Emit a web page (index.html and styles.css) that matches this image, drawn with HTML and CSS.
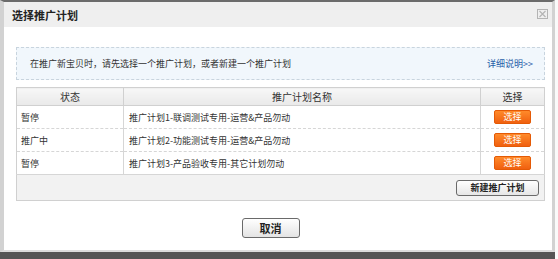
FILE: index.html
```html
<!DOCTYPE html>
<html lang="zh-CN">
<head>
    <meta charset="UTF-8">
    <title>选择推广计划</title>
    <link rel="stylesheet" href="styles.css">
</head>
<body>
    <div class="dialog">
        <div class="dialog-title">
            <h2>选择推广计划</h2>
            <span class="close-btn">
                <svg width="11" height="10" viewBox="0 0 11 10">
                    <rect x="0.5" y="0.5" width="10" height="9" fill="none" stroke="#b4b4b4"/>
                    <path d="M2.5 2 L8.5 8 M8.5 2 L2.5 8" stroke="#b4b4b4" stroke-width="1.2"/>
                </svg>
            </span>
        </div>
        <div class="dialog-body">
            <div class="notice">
                <span>在推广新宝贝时，请先选择一个推广计划，或者新建一个推广计划</span>
                <a href="#">详细说明&gt;&gt;</a>
            </div>

            <table class="plans">
                <thead>
                    <tr>
                        <th class="col-status">状态</th>
                        <th class="col-name">推广计划名称</th>
                        <th class="col-pick">选择</th>
                    </tr>
                </thead>
                <tbody>
                    <tr>
                        <td>暂停</td>
                        <td class="name">推广计划1-联调测试专用-运营&amp;产品勿动</td>
                        <td class="pick"><button class="btn-pick">选择</button></td>
                    </tr>
                    <tr>
                        <td>推广中</td>
                        <td class="name">推广计划2-功能测试专用-运营&amp;产品勿动</td>
                        <td class="pick"><button class="btn-pick">选择</button></td>
                    </tr>
                    <tr>
                        <td>暂停</td>
                        <td class="name">推广计划3-产品验收专用-其它计划勿动</td>
                        <td class="pick"><button class="btn-pick">选择</button></td>
                    </tr>
                </tbody>
                <tfoot>
                    <tr>
                        <td colspan="3"><button class="btn-new">新建推广计划</button></td>
                    </tr>
                </tfoot>
            </table>

            <div class="actions">
                <button class="btn-cancel">取消</button>
            </div>
        </div>
    </div>
    <div class="backdrop"></div>
</body>
</html>
```

FILE: styles.css
```css
body {
    margin: 0;
    background-color: #fafafa;
    font-family: "Noto Sans CJK SC", "Liberation Sans", sans-serif;
    font-size: 9px;
    color: #333;
}
.dialog {
    width: 548px;
    height: 248px;
    background-color: #fff;
    border-top: 2px solid #6b6b6b;
    border-left: 4px solid #d2d2d2;
    border-right: 3px solid #d2d2d2;
    border-bottom: 2px solid #dcdcdc;
}
.dialog-title {
    height: 25px;
    background-color: #efefef;
    display: flex;
    align-items: center;
    justify-content: space-between;
    padding: 0 4px 0 8px;
}
.dialog-title h2 {
    margin: 0;
    font-size: 11px;
    font-weight: bold;
    color: #222;
}
.close-btn {
    display: flex;
    margin-top: -1px;
}
.dialog-body {
    padding: 20px 0 0 12px;
}
.notice {
    width: 529px;
    height: 33px;
    box-sizing: border-box;
    border: 1px dashed #c8d4de;
    background-color: #f1f7fc;
    display: flex;
    align-items: center;
    justify-content: space-between;
    padding: 0 11px 0 13px;
}
.notice a {
    color: #1f5ea8;
    text-decoration: none;
}
.plans {
    margin-top: 7px;
    width: 529px;
    border-collapse: collapse;
    border: 1px solid #d0d0d0;
}
.plans th {
    height: 17px;
    padding: 0;
    font-size: 10px;
    font-weight: normal;
    background: linear-gradient(#f7f7f7, #e9e9e9);
    border-bottom: 1px solid #d0d0d0;
    border-right: 1px solid #d0d0d0;
}
.plans th.col-status {
    width: 106px;
}
.plans th.col-pick {
    width: 63px;
    border-right: none;
}
.plans tbody td {
    height: 22px;
    padding: 0 0 0 4px;
    border-bottom: 1px dashed #d6d6d6;
    border-right: 1px solid #d6d6d6;
}
.plans tbody td.name {
    padding-left: 5px;
}
.plans tbody td.pick {
    border-right: none;
    padding: 0;
    text-align: center;
}
.plans tbody tr:last-child td {
    border-bottom: 1px solid #d6d6d6;
}
.btn-pick {
    width: 37px;
    height: 14px;
    padding: 0;
    border: 1px solid #e45a06;
    border-radius: 2px;
    background: linear-gradient(#ff8a2a, #f06010);
    color: #fff;
    font-family: inherit;
    font-size: 9px;
    line-height: 12px;
}
.plans tfoot td {
    height: 25px;
    background-color: #f2f2f2;
    text-align: right;
    padding: 0 5px 0 0;
}
.btn-new {
    width: 83px;
    height: 16px;
    padding: 0;
    border: 1px solid #6a6a6a;
    border-radius: 3px;
    background: linear-gradient(#ffffff, #e6e6e6);
    color: #222;
    font-family: inherit;
    font-size: 9px;
    font-weight: bold;
    line-height: 14px;
}
.actions {
    width: 529px;
    display: flex;
    justify-content: center;
    padding-top: 17px;
}
.btn-cancel {
    width: 58px;
    height: 20px;
    margin-left: -20px;
    padding: 0;
    border: 1px solid #6a6a6a;
    border-radius: 3px;
    background: linear-gradient(#ffffff, #e4e4e4);
    color: #222;
    font-family: inherit;
    font-size: 11px;
    font-weight: bold;
}
.backdrop {
    width: 555px;
    height: 7px;
    background-color: #555;
}
```
